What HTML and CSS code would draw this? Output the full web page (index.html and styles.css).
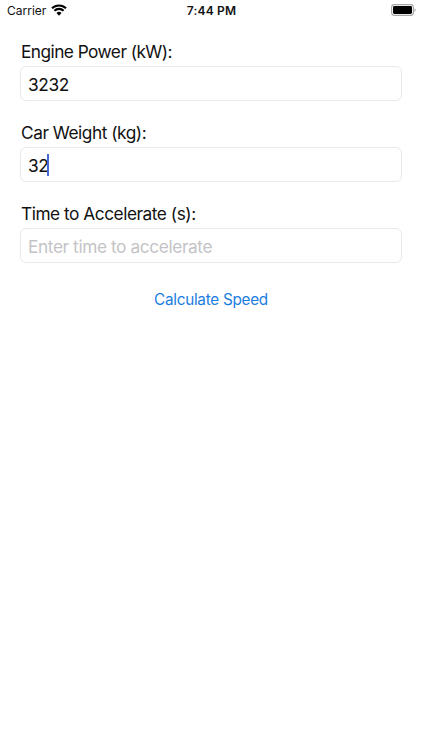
FILE: index.html
```html
<!DOCTYPE html>
<html lang="en">
<head>
  <meta charset="UTF-8">
  <meta name="viewport" content="width=device-width, initial-scale=1.0">
  <title>Speed Calculator</title>
  <link rel="stylesheet" href="styles.css">
</head>
<body>
  <header class="status-bar">
    <div class="status-bar__carrier">
      <span>Carrier</span>
      <svg class="status-bar__wifi" width="16" height="12" viewBox="0 0 16 12">
        <path d="M1 4.3a10 10 0 0 1 14 0M3.4 6.8a6.5 6.5 0 0 1 9.2 0" fill="none" stroke="#000" stroke-width="2.1"/>
        <path d="M8 11.8L5.5 9.1a3.5 3.5 0 0 1 5 0z"/>
      </svg>
    </div>
    <div class="status-bar__time">7:44 PM</div>
    <div class="status-bar__power">
      <svg class="status-bar__battery" width="25" height="12" viewBox="0 0 25 12">
        <rect x="0.6" y="0.6" width="21.8" height="10.8" rx="2.8" fill="#fff" stroke="#a6a6a6" stroke-width="1.1"/>
        <rect x="2" y="2" width="19" height="8" rx="1.4"/>
        <path d="M23.5 4.2a2 2 0 0 1 0 3.6z" fill="#999"/>
      </svg>
    </div>
  </header>
  <form class="form" id="form">
    <label class="label label--power" for="power">Engine Power (kW):</label>
    <div class="field">
      <input id="power" class="field__input" type="text" name="power" value="3232">
    </div>
    <label class="label" for="weight">Car Weight (kg):</label>
    <div class="field">
      <input id="weight" class="field__input" type="text" name="weight" value="32">
      <span class="field__caret"></span>
    </div>
    <label class="label" for="time">Time to Accelerate (s):</label>
    <div class="field">
      <input id="time" class="field__input" type="text" name="time" placeholder="Enter time to accelerate">
    </div>
    <button class="button" type="button">Calculate Speed</button>
  </form>
</body>
</html>
```
FILE: styles.css
```css
* {
  box-sizing: border-box;
}

body {
  margin: 0;
  background-color: #fff;
  color: #111;
  font-family: Inter, "Liberation Sans", sans-serif;
}

.status-bar {
  display: grid;
  grid-template-columns: 1fr auto 1fr;
  align-items: center;
  height: 22px;
  padding: 0 6px 2px 7px;
  font-size: 12px;
}

.status-bar__carrier {
  display: flex;
  align-items: center;
  gap: 5px;
}

.status-bar__time {
  font-weight: 600;
  letter-spacing: 0.2px;
}

.status-bar__power {
  display: flex;
  justify-content: flex-end;
}

.status-bar__wifi,
.status-bar__battery {
  display: block;
}

.form {
  display: flex;
  flex-direction: column;
  padding: 19px 20px 0;
}

.label {
  height: 22px;
  margin: 0 1px 3px;
  font-size: 17.3px;
  line-height: 22px;
  letter-spacing: -0.47px;
}

.label--power {
  letter-spacing: -0.55px;
}

.field {
  position: relative;
  height: 36px;
  margin-bottom: 20px;
}

.field__input {
  display: block;
  width: 100%;
  height: 35px;
  padding: 2px 7px 0;
  border: 1px solid #e9e9e9;
  border-radius: 6px;
  outline: none;
  background-color: #fff;
  color: #111;
  font-family: inherit;
  font-size: 17.3px;
  letter-spacing: -0.4px;
}

.field__input::placeholder {
  color: #c4c4c6;
  opacity: 1;
}

/* text cursor at the end of the value */
.field__caret {
  position: absolute;
  top: 7px;
  left: 27px;
  width: 2px;
  height: 22px;
  background-color: #4468d4;
}

.button {
  align-self: center;
  height: 22px;
  margin-top: 5px;
  padding: 0;
  border: none;
  background: none;
  color: #1b7de0;
  font-family: inherit;
  font-size: 15.3px;
  line-height: 22px;
  letter-spacing: -0.27px;
  cursor: pointer;
}
```
